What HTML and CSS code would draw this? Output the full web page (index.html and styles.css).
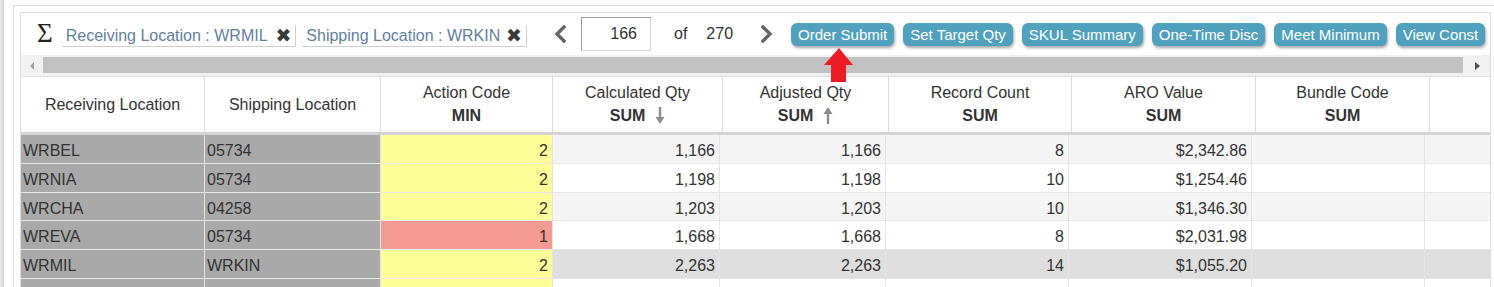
FILE: index.html
```html
<!DOCTYPE html>
<html lang="en">
<head>
  <meta charset="UTF-8" />
  <title>Order Grid</title>
  <link rel="stylesheet" href="styles.css">
</head>
<body>
  <div class="page">
    <div class="shell">
      <div class="grid-panel">
        <div class="toolbar">
          <div class="filters">
            <span class="sigma">Σ</span>
            <span class="chip chip-wide">Receiving Location : WRMIL<span class="chip-x">✖</span></span>
            <span class="chip">Shipping Location : WRKIN<span class="chip-x">✖</span></span>
          </div>
          <div class="pager">
            <svg class="chev" width="12" height="18" viewBox="0 0 12 18"><polyline points="10,2 3,9 10,16" /></svg>
            <input class="page-input" type="text" value="166" readonly>
            <span class="pager-of">of</span>
            <span class="pager-total">270</span>
            <svg class="chev chev-next" width="12" height="18" viewBox="0 0 12 18"><polyline points="2,2 9,9 2,16" /></svg>
          </div>
          <div class="actions">
            <button class="action-btn">Order Submit</button>
            <button class="action-btn">Set Target Qty</button>
            <button class="action-btn">SKUL Summary</button>
            <button class="action-btn">One-Time Disc</button>
            <button class="action-btn">Meet Minimum</button>
            <button class="action-btn">View Const</button>
          </div>
        </div>

        <div class="hscroll">
          <div class="hscroll-btn"><span class="tri tri-left"></span></div>
          <div class="hscroll-thumb"></div>
          <div class="hscroll-btn hscroll-btn-right"><span class="tri tri-right"></span></div>
        </div>

        <div class="grid-head">
          <div class="th">Receiving Location</div>
          <div class="th">Shipping Location</div>
          <div class="th">Action Code<b>MIN</b></div>
          <div class="th">Calculated Qty<b>SUM <svg class="sort" width="10" height="17" viewBox="0 0 10 17"><rect x="3.8" y="0" width="2.4" height="11" /><polygon points="0.5,10 9.5,10 5,17" /></svg></b></div>
          <div class="th">Adjusted Qty<b>SUM <svg class="sort" width="10" height="17" viewBox="0 0 10 17"><rect x="3.8" y="6" width="2.4" height="11" /><polygon points="0.5,7 9.5,7 5,0" /></svg></b></div>
          <div class="th">Record Count<b>SUM</b></div>
          <div class="th">ARO Value<b>SUM</b></div>
          <div class="th">Bundle Code<b>SUM</b></div>
          <div class="th th-last"></div>
        </div>

        <div class="grid-body">
          <div class="row alt">
            <div class="td key">WRBEL</div><div class="td key">05734</div><div class="td num flag-ok">2</div>
            <div class="td num">1,166</div><div class="td num">1,166</div><div class="td num">8</div><div class="td num">$2,342.86</div><div class="td"></div><div class="td"></div>
          </div>
          <div class="row">
            <div class="td key">WRNIA</div><div class="td key">05734</div><div class="td num flag-ok">2</div>
            <div class="td num">1,198</div><div class="td num">1,198</div><div class="td num">10</div><div class="td num">$1,254.46</div><div class="td"></div><div class="td"></div>
          </div>
          <div class="row alt">
            <div class="td key">WRCHA</div><div class="td key">04258</div><div class="td num flag-ok">2</div>
            <div class="td num">1,203</div><div class="td num">1,203</div><div class="td num">10</div><div class="td num">$1,346.30</div><div class="td"></div><div class="td"></div>
          </div>
          <div class="row">
            <div class="td key">WREVA</div><div class="td key">05734</div><div class="td num flag-low">1</div>
            <div class="td num">1,668</div><div class="td num">1,668</div><div class="td num">8</div><div class="td num">$2,031.98</div><div class="td"></div><div class="td"></div>
          </div>
          <div class="row selected">
            <div class="td key">WRMIL</div><div class="td key">WRKIN</div><div class="td num flag-ok">2</div>
            <div class="td num">2,263</div><div class="td num">2,263</div><div class="td num">14</div><div class="td num">$1,055.20</div><div class="td"></div><div class="td"></div>
          </div>
          <div class="row">
            <div class="td key"></div><div class="td key"></div><div class="td num flag-ok"></div>
            <div class="td"></div><div class="td"></div><div class="td"></div><div class="td"></div><div class="td"></div><div class="td"></div>
          </div>
        </div>
      </div>
    </div>

    <!-- callout pointing at the submit button -->
    <svg class="callout" width="30" height="34" viewBox="0 0 30 34">
      <polygon points="15,0 29,17 22,17 22,34 7,34 7,17 0,17" />
    </svg>
  </div>
</body>
</html>
```

FILE: styles.css
```css
*,*::before,*::after{box-sizing:border-box}
body{margin:0;font-family:"Liberation Sans",Arial,sans-serif;font-size:16px;color:#333;overflow:hidden;
  background:linear-gradient(90deg,#ebebeb 0,#d3d3d3 4px,#fff 4px)}
.page{position:relative;height:100vh;padding:5px 0 0 13px}
.shell{height:100%;border:1px solid #ddd;border-right:0;border-bottom:0;padding:6px 0 0 6px}
.grid-panel{width:1471px;height:100%;border:1px solid #ddd;border-bottom:0;overflow:hidden;background:#fff}

/* toolbar */
.toolbar{display:flex;align-items:center;height:42px;padding-left:16px}
.filters{display:flex;align-items:center;width:490px;height:100%}
.sigma{font-family:"Liberation Serif","Times New Roman",serif;font-size:27px;color:#222;line-height:1;margin-top:-1px}
.chip{display:flex;align-items:center;width:225px;height:22px;margin:4px 0 0 9px;padding:0 4px;border-bottom:1px solid #cfcfcf;border-right:1px solid #cfcfcf;color:#5f7f9f;white-space:nowrap}
.chip + .chip{margin-left:6px}
.chip-wide{width:235px}
.chip-x{margin-left:auto;font-family:"DejaVu Sans",sans-serif;font-size:19px;line-height:1;color:#3a3a3a}

.pager{display:flex;align-items:center;height:100%}
.chev{margin-left:27px;fill:none;stroke:#666;stroke-width:3.4;stroke-linecap:square}
.chev-next{margin-left:28px}
.page-input{width:70px;height:34px;margin:0 0 0 15px;padding:0 13px 0 0;text-align:right;font:16px "Liberation Sans",Arial,sans-serif;color:#333;
  border:1px solid;border-color:#9c9c9c #d3d3d3 #d3d3d3 #9c9c9c;background:#fff;outline:none}
.pager-of{margin-left:23px}
.pager-total{margin-left:19px}

.actions{display:flex;align-items:center;gap:9px;margin-left:18px}
.action-btn{height:23px;padding:0 7px;border:0;border-radius:6px;background:#4fa1bd;color:#fff;font:15px "Liberation Sans",Arial,sans-serif;
  box-shadow:1px 2px 3px rgba(0,0,0,.35);cursor:pointer;white-space:nowrap}

/* horizontal scrollbar */
.hscroll{display:flex;height:21px;background:#f1f1f1}
.hscroll-btn{width:22px;display:flex;align-items:center;justify-content:center}
.hscroll-btn-right{width:27px}
.hscroll-thumb{flex:1;height:16px;margin-top:2px;background:#c1c1c1}
.tri{width:0;height:0;border-top:4px solid transparent;border-bottom:4px solid transparent}
.tri-left{border-right:4px solid #a3a3a3}
.tri-right{border-left:5px solid #505050;margin-left:1px}

/* header */
.grid-head{display:grid;grid-template-columns:184px 176px 172px 170px 166px 183px 184px 174px 1fr;
  border-top:1px solid #ddd;border-bottom:3px solid #d4d4d4}
.th{height:55px;display:flex;flex-direction:column;align-items:center;justify-content:center;line-height:23px;padding-bottom:1px;border-right:1px solid #ddd;white-space:nowrap}
.th b{display:flex;align-items:center;gap:10px}
.th-last{border-right:0}
.sort{fill:#8c8c8c}

/* body */
.grid-body{overflow:hidden}
.row{display:grid;grid-template-columns:184px 176px 172px 167px 166px 183px 183px 173px 1fr;height:28.8px;background:#fff}
.row.alt{background:#f5f5f5}
.row.selected{background:#dedede}
.td{line-height:25px;padding:3px 4px 0 2px;border-right:1px solid #e4e4e4;border-bottom:1px solid #e8e8e8;white-space:nowrap;overflow:hidden;color:#333}
.td:last-child{border-right:0}
.num{text-align:right}
.key{background:#a9a9a9}
.flag-ok{background:#ffff99}
.flag-low{background:#f59b95}

.callout{position:absolute;left:824px;top:48px;fill:#ed1c24}
```
